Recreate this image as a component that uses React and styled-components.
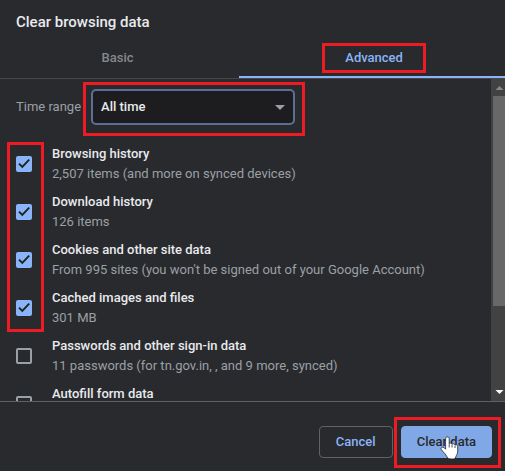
import React, { useState } from 'react';
import styled, { createGlobalStyle } from 'styled-components';

const GlobalStyle = createGlobalStyle`
  * {
    box-sizing: border-box;
  }
  body {
    margin: 0;
    background: #292a2d;
    font-family: Roboto, "Liberation Sans", sans-serif;
    font-size: 13px;
    line-height: 20px;
    color: #e8eaed;
  }
  button, select {
    font: inherit;
  }
`;

const Dialog = styled.main`
  display: flex;
  flex-direction: column;
  height: 100vh;
  overflow: hidden;
`;

const Title = styled.h1`
  margin: 0;
  padding: 12px 16px 4px;
  font-size: 15px;
  font-weight: 500;
  line-height: 20px;
`;

const Tabs = styled.div`
  display: grid;
  grid-template-columns: 9fr 10fr;
  border-bottom: 1px solid #46474a;
`;

const Tab = styled.button`
  padding: 12px 4px 8px 0;
  border: 0;
  border-bottom: 2px solid ${(props) => (props.$active ? '#8ab4f8' : 'transparent')};
  background: none;
  color: ${(props) => (props.$active ? '#8ab4f8' : '#85888c')};
  font-weight: 500;
  cursor: pointer;

  &:last-child {
    padding-right: 0;
    padding-left: 4px;
  }
`;

const Marked = styled.span`
  position: relative;
  display: inline-block;
`;

// red frame laid over the part it points out
const Frame = styled.span`
  position: absolute;
  inset: ${(props) => props.$inset};
  border: 3px solid #ed1c24;
  pointer-events: none;
`;

const Body = styled.div`
  flex: 1;
  display: flex;
  min-height: 0;
  border-bottom: 1px solid #5f6064;
`;

const Content = styled.div`
  flex: 1;
  min-width: 0;
  overflow: hidden;
  padding: 10px 0 0 16px;
`;

const TimeRange = styled.div`
  display: flex;
  align-items: center;
  gap: 10px;
  margin-bottom: 19px;
  color: #9aa0a6;
`;

const SelectBox = styled(Marked)`
  flex: 0 1 204px;
`;

const Select = styled.select`
  display: block;
  width: 100%;
  height: 36px;
  padding: 0 8px;
  border: 2px solid #5b6f97;
  border-radius: 5px;
  outline: 0;
  appearance: none;
  background: #1d1d1f;
  color: #e8eaed;
  font-weight: 500;
`;

const SelectArrow = styled.svg`
  position: absolute;
  top: 16px;
  right: 10px;
  pointer-events: none;
`;

const Group = styled.div`
  position: relative;
`;

const CheckFrame = styled(Frame)`
  right: auto;
  width: 37px;
`;

const Row = styled.label`
  display: flex;
  align-items: center;
  gap: 20px;
  padding-bottom: 8px;
`;

const CheckHolder = styled.span`
  position: relative;
  flex: none;
  width: 16px;
  height: 16px;
`;

const Checkbox = styled.input`
  display: block;
  width: 16px;
  height: 16px;
  margin: 0;
  border: 2px solid #9aa0a6;
  border-radius: 2px;
  appearance: none;

  &:checked {
    border-color: #8ab4f8;
    background: #8ab4f8;
  }
`;

const Tick = styled.svg`
  position: absolute;
  inset: 0;
  pointer-events: none;
`;

const RowTitle = styled.span`
  display: block;
  font-weight: 500;
`;

const RowNote = styled.span`
  display: block;
  color: #9aa0a6;
`;

const Scrollbar = styled.div`
  display: flex;
  flex-direction: column;
  align-items: flex-end;
  width: 14px;
  background: #424242;
`;

const ScrollArrow = styled.svg`
  flex: none;
  width: 12px;
  height: 17px;
`;

const ScrollTrack = styled.div`
  flex: 1;
  width: 12px;
`;

const ScrollThumb = styled.div`
  height: 73%;
  background: #686868;
`;

const Footer = styled.footer`
  display: flex;
  justify-content: flex-end;
  gap: 8px;
  padding: 24px 13px 13px;
`;

const Button = styled.button`
  min-width: 74px;
  height: 32px;
  padding: 0 15px;
  border: 1px solid ${(props) => (props.$primary ? '#80a7e6' : '#5f6368')};
  border-radius: 4px;
  background: ${(props) => (props.$primary ? '#80a7e6' : 'transparent')};
  color: ${(props) => (props.$primary ? '#292a2d' : '#8ab4f8')};
  font-weight: 500;
`;

const Pointer = styled.svg`
  position: absolute;
  top: 10px;
  left: 39px;
  pointer-events: none;
`;

const cachedItems = [
  { id: 'history', title: 'Browsing history', note: '2,507 items (and more on synced devices)' },
  { id: 'downloads', title: 'Download history', note: '126 items' },
  {
    id: 'cookies',
    title: 'Cookies and other site data',
    note: "From 995 sites (you won't be signed out of your Google Account)",
  },
  { id: 'cache', title: 'Cached images and files', note: '301 MB' },
];

const personalItems = [
  {
    id: 'passwords',
    title: 'Passwords and other sign-in data',
    note: '11 passwords (for tn.gov.in, , and 9 more, synced)',
  },
  { id: 'autofill', title: 'Autofill form data', note: '' },
];

function Item({ item, checked, onToggle }) {
  return (
    <Row htmlFor={item.id}>
      <CheckHolder>
        <Checkbox
          id={item.id}
          type="checkbox"
          checked={checked}
          onChange={() => onToggle(item.id)}
        />
        {checked && (
          <Tick width="16" height="16" viewBox="0 0 16 16" aria-hidden="true">
            <path d="M3 7.6 L6.3 10.9 L13.2 3.7" fill="none" stroke="#202124" strokeWidth="1.9" />
          </Tick>
        )}
      </CheckHolder>
      <span>
        <RowTitle>{item.title}</RowTitle>
        <RowNote>{item.note || '\u00a0'}</RowNote>
      </span>
    </Row>
  );
}

export default function App() {
  const [tab, setTab] = useState('advanced');
  const [selected, setSelected] = useState(['history', 'downloads', 'cookies', 'cache']);

  const toggle = (id) => {
    setSelected(selected.includes(id) ? selected.filter((s) => s !== id) : [...selected, id]);
  };

  const renderItem = (item) => (
    <Item key={item.id} item={item} checked={selected.includes(item.id)} onToggle={toggle} />
  );

  return (
    <Dialog>
      <GlobalStyle />
      <Title>Clear browsing data</Title>
      <Tabs role="tablist">
        <Tab
          role="tab"
          aria-selected={tab === 'basic'}
          $active={tab === 'basic'}
          onClick={() => setTab('basic')}
        >
          Basic
        </Tab>
        <Tab
          role="tab"
          aria-selected={tab === 'advanced'}
          $active={tab === 'advanced'}
          onClick={() => setTab('advanced')}
        >
          <Marked>
            Advanced
            <Frame $inset="-5px -23px" />
          </Marked>
        </Tab>
      </Tabs>
      <Body>
        <Content>
          <TimeRange>
            <label htmlFor="range">Time range</label>
            <SelectBox>
              <Select id="range" defaultValue="all">
                <option value="all">All time</option>
              </Select>
              <SelectArrow width="10" height="5" viewBox="0 0 10 5" aria-hidden="true">
                <path d="M0 0 H10 L5 5 Z" fill="#9aa0a6" />
              </SelectArrow>
              <Frame $inset="-7px -10px -11px -8px" />
            </SelectBox>
          </TimeRange>
          <Group>
            {cachedItems.map(renderItem)}
            <CheckFrame $inset="-2px auto 4px -9px" />
          </Group>
          <Group>{personalItems.map(renderItem)}</Group>
        </Content>
        <Scrollbar aria-hidden="true">
          <ScrollArrow viewBox="0 0 12 17">
            <path d="M2.5 11 L6.5 7 L10.5 11 Z" fill="#85888c" />
          </ScrollArrow>
          <ScrollTrack>
            <ScrollThumb />
          </ScrollTrack>
          <ScrollArrow viewBox="0 0 12 17">
            <path d="M2.5 6 L6.5 10 L10.5 6 Z" fill="#ffffff" />
          </ScrollArrow>
        </Scrollbar>
      </Body>
      <Footer>
        <Button>Cancel</Button>
        <Marked>
          <Button $primary>Clear data</Button>
          <Frame $inset="-9px -9px -10px -7px" />
          <Pointer width="19" height="24" viewBox="0 0 19 24" aria-hidden="true">
            <path
              d="M5.6 2.5 C5.6 0.4 9.2 0.4 9.2 2.5 V7.4 C9.8 6.8 11.6 7 12 8.2 C12.6 7.4 14.6 7.6 15 9 C15.8 8.4 17.7 8.8 17.7 10.6 V15.5 C17.7 18 16.2 19.2 15.8 21 C15.4 22.6 14.5 23 12 23 C9 23 7.4 22.6 7 20.8 C6 18.6 3.6 16.4 1.2 13.4 C0.4 11.6 2.6 10.4 4 11.6 L5.6 13.2 Z"
              fill="#ffffff"
              stroke="#222222"
              strokeWidth="0.8"
              strokeLinejoin="round"
            />
            <path d="M9.2 7.5 V11.5 M12 8.5 V11.5 M15 9.5 V12" stroke="#222222" strokeWidth="0.8" />
          </Pointer>
        </Marked>
      </Footer>
    </Dialog>
  );
}
